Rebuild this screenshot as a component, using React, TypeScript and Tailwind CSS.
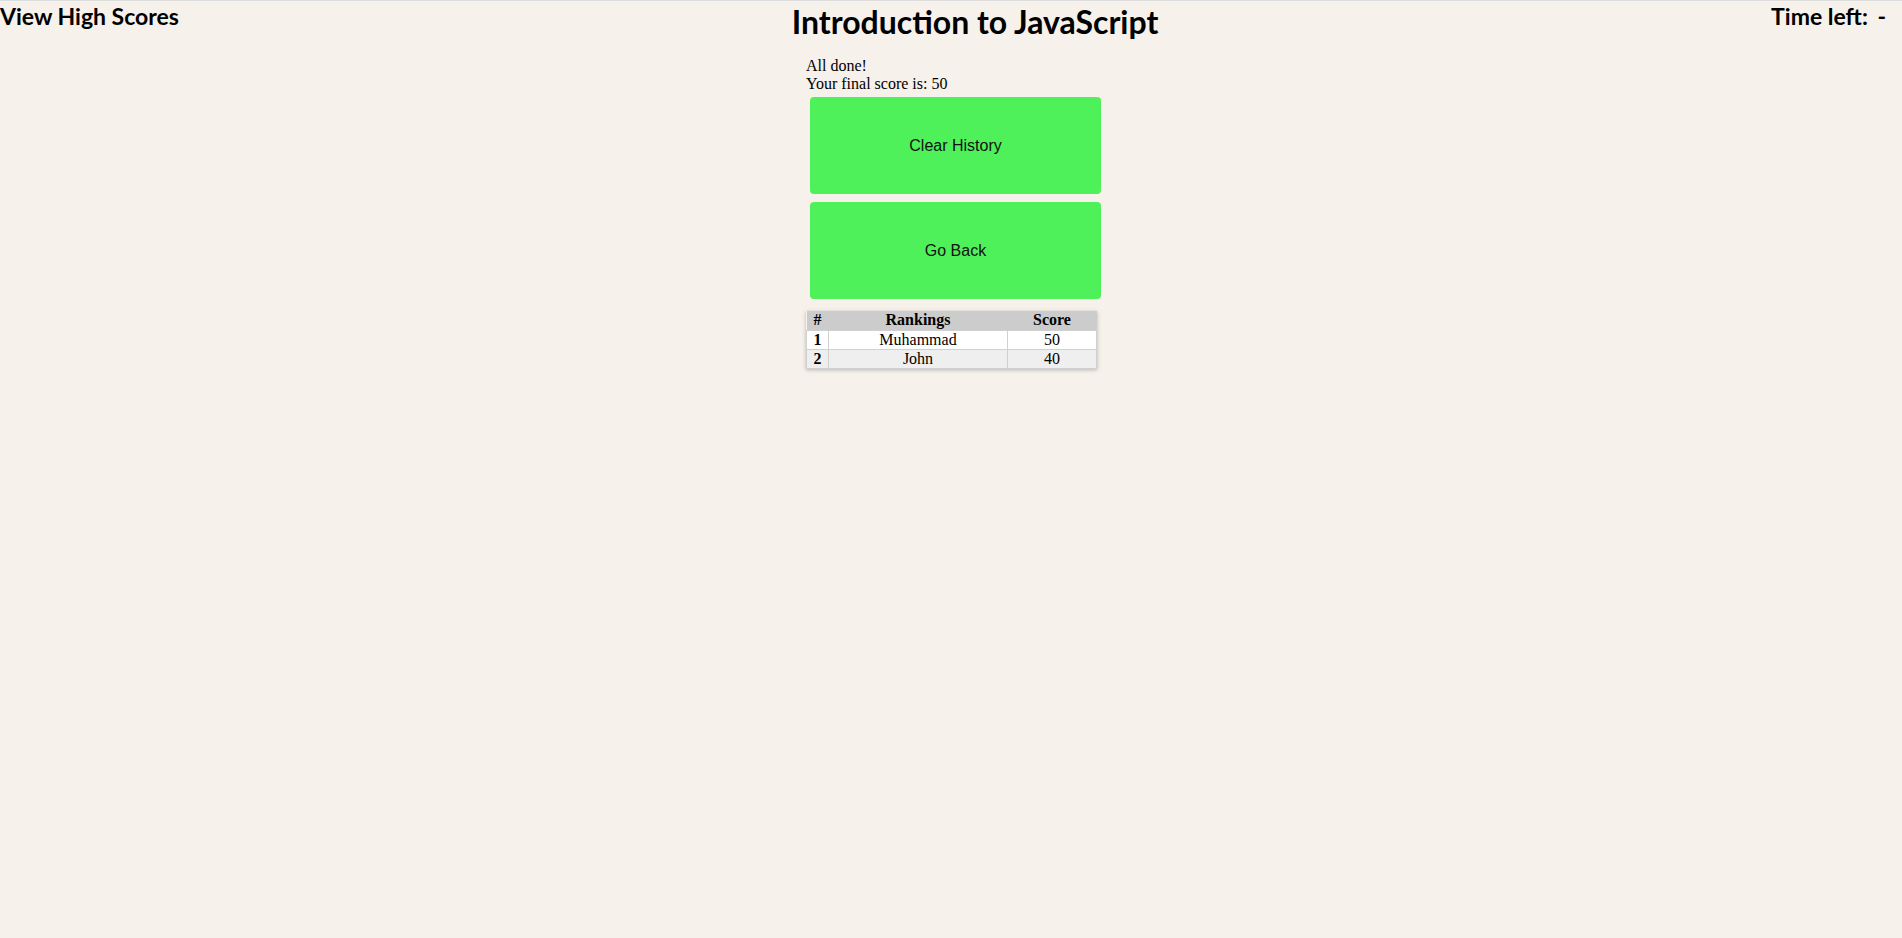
const SCORES = [
  { rank: 1, name: "Muhammad", score: 50 },
  { rank: 2, name: "John", score: 40 },
];

export default function App() {
  return (
    <div className="min-h-[938px] bg-[#f6f1ea] border-t border-[#dedede] text-black">
      {/* Header */}
      <header className="flex items-start justify-between font-['Lato',sans-serif] font-bold">
        <h2 className="text-[23px] leading-[31px] m-0">View High Scores</h2>
        <h1 className="text-[32px] leading-[40px] m-0 pt-[1px]">Introduction to JavaScript</h1>
        <h2 className="text-[23px] leading-[31px] m-0 pr-4">
          Time left: <span className="ml-1">-</span>
        </h2>
      </header>

      {/* Results */}
      <main className="mt-[15px] flex justify-center">
        <div className="w-[291px] ml-[1px] font-['Liberation_Serif',serif] text-[16px]">
          <p className="leading-[18px]">All done!</p>
          <p className="leading-[18px]">Your final score is: 50</p>

          <div className="mt-[4px] ml-1 flex flex-col gap-2">
            <button className="h-[97px] w-[291px] rounded-[4px] bg-[#4ef15a] font-['Liberation_Sans',sans-serif] text-[16px] text-[#111]">
              Clear History
            </button>
            <button className="h-[97px] w-[291px] rounded-[4px] bg-[#4ef15a] font-['Liberation_Sans',sans-serif] text-[16px] text-[#111]">
              Go Back
            </button>
          </div>

          <table className="mt-3 w-[291px] border-collapse text-center shadow-[0_1px_4px_rgba(0,0,0,0.25)]">
            <thead>
              <tr className="bg-[#cccccc] h-[19px] leading-[18px]">
                <th className="w-[22px] p-0 font-bold">#</th>
                <th className="w-[179px] p-0 font-bold">Rankings</th>
                <th className="p-0 font-bold">Score</th>
              </tr>
            </thead>
            <tbody>
              {SCORES.map((s, i) => (
                <tr
                  key={s.rank}
                  className={`h-[19px] leading-[17px] ${i % 2 === 0 ? "bg-white" : "bg-[#efefef]"}`}
                >
                  <td className="p-0 border border-[#d0d0d0] font-bold">{s.rank}</td>
                  <td className="p-0 border border-[#d0d0d0]">{s.name}</td>
                  <td className="p-0 border border-[#d0d0d0]">{s.score}</td>
                </tr>
              ))}
            </tbody>
          </table>
        </div>
      </main>
    </div>
  );
}
